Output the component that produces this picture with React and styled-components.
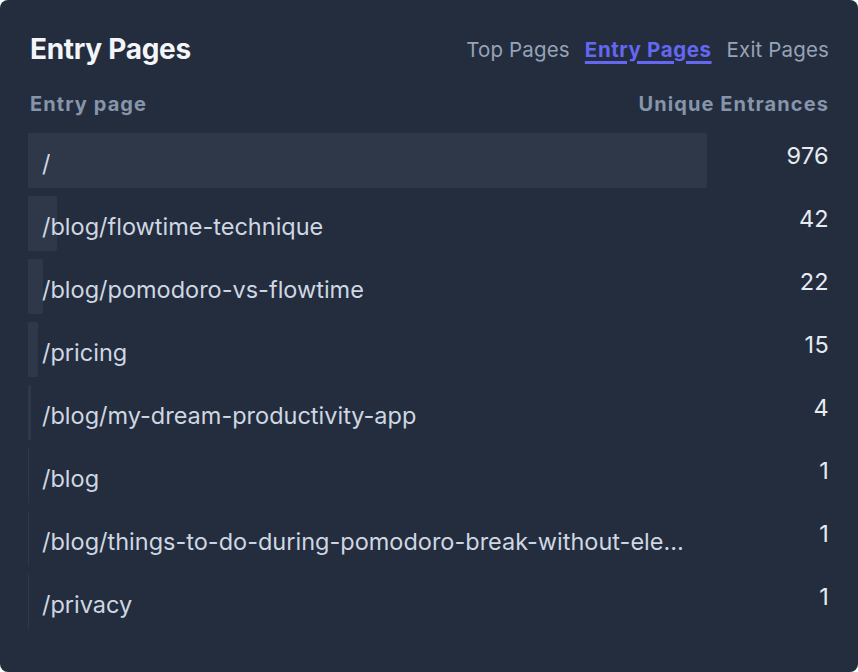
import React, { useState } from 'react';
import styled, { createGlobalStyle } from 'styled-components';

const GlobalStyle = createGlobalStyle`
  html, body {
    margin: 0;
    padding: 0;
    background: #ffffff;
  }
  body {
    font-family: Inter, "Noto Sans", sans-serif;
  }
`;

const Card = styled.div`
  box-sizing: border-box;
  width: 858px;
  height: 672px;
  background-color: #232d3e;
  border-radius: 8px;
  padding: 32px 29px 0 28px;
`;

const Header = styled.div`
  display: flex;
  justify-content: space-between;
  align-items: center;
  height: 34px;
`;

const Title = styled.h2`
  margin: 0 0 0 2px;
  font-size: 28px;
  font-weight: 700;
  color: #f3f5f8;
  letter-spacing: -0.3px;
`;

const Tabs = styled.div`
  display: flex;
  gap: 15px;
  align-items: center;
`;

const Tab = styled.button`
  background: none;
  border: none;
  padding: 0;
  font-family: inherit;
  font-size: 20.5px;
  cursor: pointer;
  color: ${(p) => (p.$active ? '#6467f2' : '#97a3b6')};
  font-weight: ${(p) => (p.$active ? 700 : 400)};
  letter-spacing: ${(p) => (p.$active ? '0.6px' : '0.15px')};
  text-decoration: ${(p) => (p.$active ? 'underline' : 'none')};
  text-decoration-thickness: 3px;
  text-underline-offset: 4px;
`;

const ColumnHeads = styled.div`
  display: flex;
  justify-content: space-between;
  margin-top: 23px;
  padding-left: 2px;
  font-size: 20px;
  font-weight: 700;
  letter-spacing: 1.1px;
  color: #8795aa;
  height: 30px;
  align-items: center;
`;

const List = styled.div`
  display: grid;
  row-gap: 8px;
  margin-top: 14px;
`;

const Row = styled.div`
  display: grid;
  grid-template-columns: 679px 1fr;
  height: 55px;
`;

const BarCell = styled.div`
  position: relative;
  height: 55px;
  display: flex;
  align-items: center;
  padding: 5px 16px 0 14px;
  box-sizing: border-box;
  min-width: 0;
`;

const Bar = styled.div`
  position: absolute;
  left: 0;
  top: 0;
  bottom: 0;
  background-color: #2e3849;
  border-radius: 2px;
`;

const Label = styled.span`
  position: relative;
  min-width: 0;
  font-size: 23.5px;
  color: #cfd7e2;
  white-space: nowrap;
  overflow: hidden;
  text-overflow: ellipsis;
`;

const Count = styled.div`
  text-align: right;
  font-size: 23.5px;
  color: #e6ebf1;
  padding-top: 8px;
  letter-spacing: 0.3px;
`;

const rows = [
  { page: '/', count: 976 },
  { page: '/blog/flowtime-technique', count: 42 },
  { page: '/blog/pomodoro-vs-flowtime', count: 22 },
  { page: '/pricing', count: 15 },
  { page: '/blog/my-dream-productivity-app', count: 4 },
  { page: '/blog', count: 1 },
  { page: '/blog/things-to-do-during-pomodoro-break-without-electronics', count: 1 },
  { page: '/privacy', count: 1 },
];

const tabs = ['Top Pages', 'Entry Pages', 'Exit Pages'];

const App = () => {
  const [active, setActive] = useState('Entry Pages');
  const max = Math.max(...rows.map((r) => r.count));

  return (
    <>
      <GlobalStyle />
      <Card>
        <Header>
          <Title>Entry Pages</Title>
          <Tabs>
            {tabs.map((t) => (
              <Tab key={t} $active={t === active} onClick={() => setActive(t)}>
                {t}
              </Tab>
            ))}
          </Tabs>
        </Header>
        <ColumnHeads>
          <span>Entry page</span>
          <span>Unique Entrances</span>
        </ColumnHeads>
        <List>
          {rows.map((r) => (
            <Row key={r.page}>
              <BarCell>
                <Bar style={{ width: `${(r.count / max) * 100}%` }} />
                <Label>{r.page}</Label>
              </BarCell>
              <Count>{r.count}</Count>
            </Row>
          ))}
        </List>
      </Card>
    </>
  );
};

export default App;
